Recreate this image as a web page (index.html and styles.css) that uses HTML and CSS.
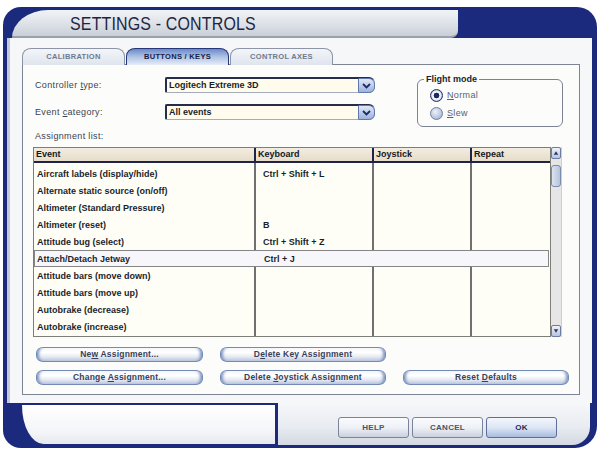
FILE: index.html
```html
<!DOCTYPE html>
<html>
<head>
<meta charset="utf-8">
<link rel="stylesheet" href="styles.css">
</head>
<body>
<div class="window">
  <div class="titlebar">
    <div class="title-tab"><span class="title">SETTINGS - CONTROLS</span></div>
  </div>
  <div class="body">
    <div class="tabs">
      <div class="tab">CALIBRATION</div>
      <div class="tab active">BUTTONS / KEYS</div>
      <div class="tab">CONTROL AXES</div>
    </div>
    <div class="panel">
      <div class="form">
        <div class="fields">
          <div class="field">
            <span class="label">Controller <u>t</u>ype:</span>
            <div class="select"><span class="value">Logitech Extreme 3D</span><span class="arrow"><svg width="11" height="8" viewBox="0 0 11 8"><polyline points="2,2 5.5,5.5 9,2" fill="none" stroke="#1f2b66" stroke-width="1.8"/></svg></span></div>
          </div>
          <div class="field">
            <span class="label">Event <u>c</u>ategory:</span>
            <div class="select"><span class="value">All events</span><span class="arrow"><svg width="11" height="8" viewBox="0 0 11 8"><polyline points="2,2 5.5,5.5 9,2" fill="none" stroke="#1f2b66" stroke-width="1.8"/></svg></span></div>
          </div>
        </div>
        <div class="group">
          <span class="legend">Flight mode</span>
          <div class="radio-row"><span class="radio on"></span><span class="rlabel"><u>N</u>ormal</span></div>
          <div class="radio-row"><span class="radio"></span><span class="rlabel"><u>S</u>lew</span></div>
        </div>
      </div>
      <div class="list-label">Assignment list:</div>
      <div class="list">
        <div class="grid">
          <div class="head">
            <div class="hc">Event</div>
            <div class="hc">Keyboard</div>
            <div class="hc">Joystick</div>
            <div class="hc last">Repeat</div>
          </div>
          <div class="rows">
            <div class="row"><span>Aircraft labels (display/hide)</span><span class="kb">Ctrl + Shift + L</span><span></span><span></span></div>
            <div class="row"><span>Alternate static source (on/off)</span><span class="kb"></span><span></span><span></span></div>
            <div class="row"><span>Altimeter (Standard Pressure)</span><span class="kb"></span><span></span><span></span></div>
            <div class="row"><span>Altimeter (reset)</span><span class="kb">B</span><span></span><span></span></div>
            <div class="row"><span>Attitude bug (select)</span><span class="kb">Ctrl + Shift + Z</span><span></span><span></span></div>
            <div class="row sel"><span>Attach/Detach Jetway</span><span class="kb">Ctrl + J</span><span></span><span></span></div>
            <div class="row"><span>Attitude bars (move down)</span><span class="kb"></span><span></span><span></span></div>
            <div class="row"><span>Attitude bars (move up)</span><span class="kb"></span><span></span><span></span></div>
            <div class="row"><span>Autobrake (decrease)</span><span class="kb"></span><span></span><span></span></div>
            <div class="row"><span>Autobrake (increase)</span><span class="kb"></span><span></span><span></span></div>
          </div>
        </div>
        <div class="scroll">
          <div class="sb-btn"><svg width="9" height="10" viewBox="0 0 9 10"><polygon points="4.5,3 7,7 2,7" fill="#2a3566"/></svg></div>
          <div class="thumb"></div>
          <div class="track"></div>
          <div class="sb-btn"><svg width="9" height="10" viewBox="0 0 9 10"><polygon points="2,3 7,3 4.5,7" fill="#2a3566"/></svg></div>
        </div>
      </div>
      <div class="btn-row first">
        <div class="btn">Ne<u>w</u> Assignment...</div>
        <div class="btn">D<u>e</u>lete Key Assignment</div>
      </div>
      <div class="btn-row">
        <div class="btn">Change <u>A</u>ssignment...</div>
        <div class="btn">Delete <u>J</u>oystick Assignment</div>
        <div class="btn">Reset <u>D</u>efaults</div>
      </div>
    </div>
  </div>
  <div class="footer">
    <div class="status"></div>
    <div class="actions">
      <div class="fbtn">HELP</div>
      <div class="fbtn">CANCEL</div>
      <div class="fbtn ok">OK</div>
    </div>
  </div>
</div>
</body>
</html>
```

FILE: styles.css
```css
* { box-sizing: border-box; }
html, body { margin: 0; padding: 0; }
body {
  width: 600px;
  height: 453px;
  background: #ffffff;
  font-family: "Liberation Sans", Arial, sans-serif;
  overflow: hidden;
}
u { text-decoration: underline; text-underline-offset: 1px; }

.window {
  margin: 7px 0 0 3px;
  width: 594px;
  height: 441px;
  background: #1b2a7c;
  border-radius: 18px 20px 22px 18px;
  display: flex;
  flex-direction: column;
  overflow: hidden;
}

.titlebar {
  height: 31px;
  padding-top: 3px;
  display: flex;
}
.title-tab {
  margin-left: 9px;
  width: 446px;
  height: 28px;
  background: linear-gradient(#f1f3f6, #dde1e7 55%, #c9ced7);
  border-top-left-radius: 36px 28px;
  border-bottom-right-radius: 7px;
  border-bottom: 2px solid #9aa1ad;
  padding-left: 58px;
}
.title {
  display: inline-block;
  font-size: 19px;
  line-height: 28px;
  color: #1d2542;
  letter-spacing: 0.2px;
  transform: scaleX(0.84);
  transform-origin: left center;
  white-space: nowrap;
}

.body {
  margin: 0 5px 0 4px;
  height: 365px;
  background: #f5f7f9;
  border-left: 3px solid #c3cadb;
  padding: 10px 12px 0 12px;
}

.tabs {
  display: flex;
  gap: 1px;
  height: 17px;
  margin-bottom: -1px;
  position: relative;
  z-index: 1;
}
.tab {
  width: 103px;
  height: 17px;
  border: 1px solid #8c95a8;
  border-bottom: none;
  border-radius: 9px 9px 0 0 / 8px 8px 0 0;
  background: linear-gradient(#f3f5f9, #dfe4ed);
  color: #6f7a8f;
  font-size: 7.5px;
  font-weight: bold;
  letter-spacing: 0.3px;
  text-align: center;
  line-height: 16px;
}
.tab.active {
  border-color: #26367a;
  background: linear-gradient(#6a89c6, #a9bfe2 45%, #e6edf7);
  color: #16204a;
}

.panel {
  height: 331px;
  border: 1px solid #7d8494;
  background: #fcfdfb;
  padding: 12px 0 0 12px;
}

.form { display: flex; height: 50px; }
.fields { width: 340px; display: flex; flex-direction: column; gap: 11px; }
.field { display: flex; align-items: center; height: 16px; }
.label {
  width: 130px;
  font-size: 9px;
  letter-spacing: 0.35px;
  color: #3c4250;
}
.select {
  width: 210px;
  height: 16px;
  display: flex;
  background: #fffcee;
  border: 1px solid #a3abbd;
  border-left: 2px solid #262d4a;
  border-top: 2px solid #262d4a;
  border-radius: 2px 6px 6px 2px;
}
.value {
  flex: 1;
  font-size: 9px;
  font-weight: bold;
  color: #1a1e2c;
  line-height: 12px;
  padding-left: 2px;
}
.arrow {
  width: 17px;
  margin: -1px -1px -1px 0;
  background: linear-gradient(#dfe8f6, #9db3dc);
  border: 1px solid #5f79b0;
  border-radius: 1px 6px 6px 1px;
  display: flex;
  align-items: center;
  justify-content: center;
}

.group {
  position: relative;
  margin: 2px 0 0 42px;
  width: 146px;
  height: 48px;
  border: 1px solid #7c8394;
  border-radius: 6px;
  padding: 9px 0 0 12px;
  display: flex;
  flex-direction: column;
  gap: 6px;
}
.legend {
  position: absolute;
  left: 6px;
  top: -6px;
  padding: 0 2px;
  background: #fcfdfb;
  font-size: 9px;
  font-weight: bold;
  color: #1a1e2c;
  line-height: 10px;
}
.radio-row { display: flex; align-items: center; height: 12px; }
.radio {
  width: 13px;
  height: 13px;
  border-radius: 50%;
  border: 1px solid #6b7ea6;
  background: radial-gradient(circle at 40% 35%, #eef2f9, #98abcc);
  margin-right: 4px;
}
.radio.on {
  border: 1px solid #25306a;
  background: radial-gradient(circle, #1c2860 0 2.6px, #ffffff 3.2px, #e3e9f4 4.5px, #8ea2c9 6px);
}
.rlabel {
  font-size: 9px;
  letter-spacing: 0.35px;
  color: #5a6070;
}

.list-label {
  margin-top: 4px;
  height: 11px;
  font-size: 9px;
  line-height: 11px;
  letter-spacing: 0.35px;
  color: #3c4250;
}

.list {
  margin: 5px 0 0 -2px;
  display: flex;
  height: 190px;
}
.grid {
  width: 518px;
  border: 1px solid #7e7e78;
  display: flex;
  flex-direction: column;
}
.head {
  display: grid;
  grid-template-columns: 222px 118px 98px 1fr;
  height: 15px;
  border-bottom: 2px solid #1d2448;
  background: linear-gradient(#f3ece0, #e6dcc8);
}
.hc {
  border-right: 2px solid #1d2448;
  font-size: 9px;
  font-weight: bold;
  color: #141824;
  line-height: 13px;
  padding-left: 2px;
}
.hc.last { border-right: none; }
.rows {
  flex: 1;
  padding-top: 2px;
  background:
    linear-gradient(#707070, #707070) 220px 0 / 2px 100% no-repeat,
    linear-gradient(#707070, #707070) 338px 0 / 2px 100% no-repeat,
    linear-gradient(#707070, #707070) 436px 0 / 2px 100% no-repeat,
    #fffef6;
}
.row {
  display: grid;
  grid-template-columns: 222px 118px 98px 1fr;
  height: 17px;
  font-size: 9px;
  font-weight: bold;
  color: #1a1e2c;
  line-height: 18px;
  white-space: nowrap;
}
.row span:first-child { padding-left: 3px; }
.row .kb { padding-left: 7px; }
.row.sel {
  background: #f6f6fb;
  border: 1px solid #858585;
  line-height: 16px;
  margin-right: 1px;
}
.row.sel span:first-child { padding-left: 2px; }

.scroll {
  width: 11px;
  background: #e6e6e6;
  border-right: 1px solid #cfcfcf;
  display: flex;
  flex-direction: column;
}
.sb-btn {
  height: 12px;
  background: linear-gradient(#eff3f9, #b6c5df);
  border: 1px solid #6c7da2;
  border-radius: 2px;
  display: flex;
  align-items: center;
  justify-content: center;
}
.thumb {
  margin-top: 6px;
  height: 22px;
  background: linear-gradient(90deg, #dbe3f0, #b4c3de);
  border: 1px solid #7b8bad;
  border-radius: 3px;
}
.track { flex: 1; }

.btn-row {
  display: flex;
  margin-left: 1px;
  gap: 17px;
  margin-top: 8px;
}
.btn-row.first { margin-top: 10px; }
.btn {
  width: 166px;
  height: 15px;
  border-radius: 7px / 6px;
  border: 1px solid #7489b3;
  background: linear-gradient(#f4f6fa, #ffffff 35%, #e3e8f1 70%, #b8c5dd);
  box-shadow: inset 5px 0 3px -3px #7f96c2, inset -5px 0 3px -3px #7f96c2;
  font-size: 8.5px;
  font-weight: bold;
  color: #3a4157;
  text-align: center;
  line-height: 13px;
  letter-spacing: 0.2px;
}
.btn-row .btn:first-child { width: 167px; }

.footer {
  height: 45px;
  display: flex;
}
.status {
  margin: 2px 0 4px 19px;
  width: 253px;
  background: linear-gradient(#ffffff, #f4f5f8 70%, #e6e8ee);
  border-bottom-left-radius: 22px 40px;
}
.actions {
  margin: 0 7px 3px 3px;
  flex: 1;
  background: linear-gradient(#f5f7fa, #e9ecf1 55%, #d3d8e2);
  border-bottom-right-radius: 18px;
  display: flex;
  justify-content: flex-end;
  gap: 3px;
  padding: 14px 33px 0 0;
}
.fbtn {
  width: 71px;
  height: 21px;
  border: 1px solid #7a8498;
  border-radius: 3px;
  background: linear-gradient(#fafbfd, #eef1f6 50%, #c9d0de);
  font-size: 8px;
  font-weight: bold;
  letter-spacing: 0.3px;
  color: #4a5266;
  text-align: center;
  line-height: 19px;
}
.fbtn.ok {
  background: linear-gradient(#f3f6fb, #dde6f4 50%, #a9bcdf);
  color: #1f2a55;
  border-color: #5d6f98;
}
```
